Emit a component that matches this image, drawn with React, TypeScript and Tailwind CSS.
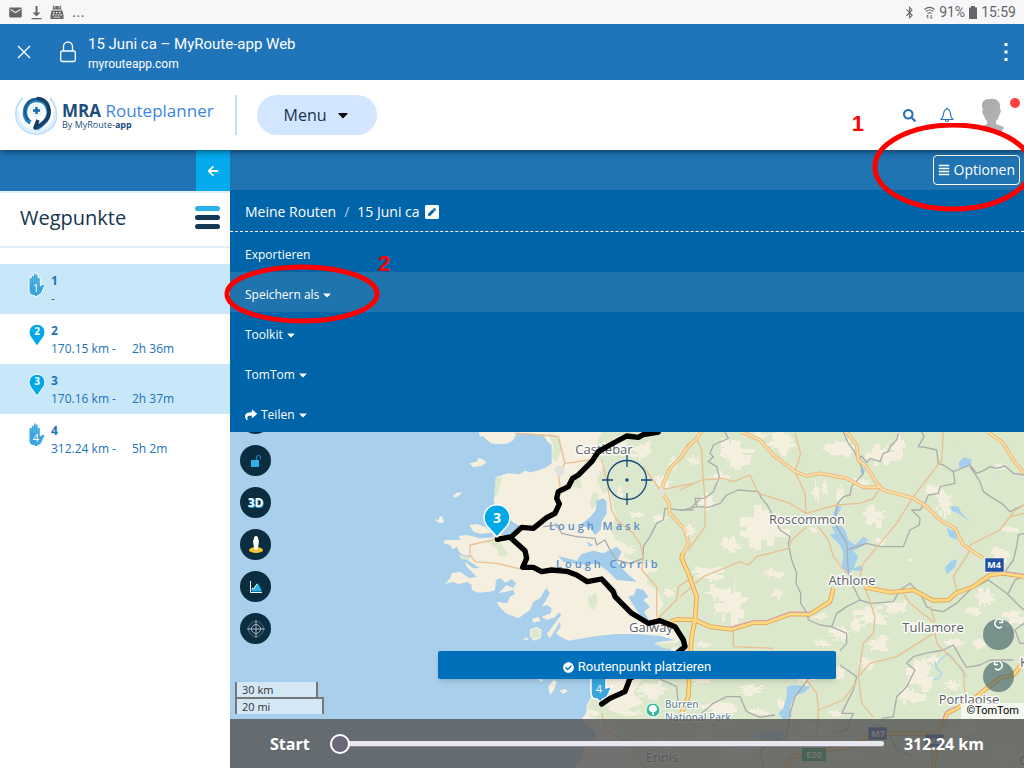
import React from "react";
import {
  FaAlignJustify,
  FaArrowLeft,
  FaBluetoothB,
  FaCaretDown,
  FaCheckCircle,
  FaPenSquare,
  FaSearch,
  FaShare,
} from "react-icons/fa";
import { MdMail } from "react-icons/md";

const StatusBar = () => {
  return (
    <div className="flex h-6 items-center justify-between bg-[#f7f7fa] px-2 font-['Roboto',sans-serif] text-sm text-[#666]">
      <div className="flex items-center gap-2">
        <MdMail size={15} />
        <svg width="11" height="15" viewBox="0 0 11 15" fill="currentColor">
          <path d="M4.500 1h2v6.500h3L5.500 11.500l-4-4h3zM.5 13h10v1.200H.5z" />
        </svg>
        <svg width="14" height="15" viewBox="0 0 14 15" fill="currentColor">
          <path d="M2.500 1l.8-.6 1 1.300a6 6 0 015.400 0l1-1.300.8.6-1 1.400c.6.600 1 1.200 1.200 2.100H2.300c.2-.9.600-1.500 1.200-2.100z" />
          <path
            fillRule="evenodd"
            d="M1.500 5.500h11l1 5v3.500h-13v-3.500zM3 7v1.300h1.500V7zm3 0v1.300h1.500V7zm3 0v1.300h1.500V7zM2.500 9.300v1.200H4V9.300zm2.800 0v1.200h1.300V9.300zm2.700 0v1.200h1.300V9.300zm2.500 0v1.200H12V9.300zM3.500 11.700v.9h7v-.9z"
          />
          <circle cx="5" cy="2.800" r=".6" fill="#f7f7fa" />
          <circle cx="9" cy="2.800" r=".6" fill="#f7f7fa" />
        </svg>
        <span className="text-base">...</span>
      </div>
      <div className="flex items-center">
        <FaBluetoothB size={13} />
        <svg className="ml-2" width="11" height="13" viewBox="0 0 11 13" fill="none" stroke="currentColor">
          <path d="M.5 3.500Q5.500-.8 10.500 3.500M2 5.500q3.500-3 7 0M3.500 7.500q2-1.500 4 0" strokeWidth="1.200" />
          <path d="M3.800 12.500V9M2.500 10.300L3.800 9M7 9v3.500M8.300 11.200L7 12.500" />
        </svg>
        <span className="ml-1">91%</span>
        <svg className="mx-1" width="8" height="13" viewBox="0 0 8 13" fill="currentColor">
          <path d="M2 0h4v1.500h2V13H0V1.500h2z" />
        </svg>
        <span>15:59</span>
      </div>
    </div>
  );
};

const BrowserBar = () => {
  return (
    <div className="flex h-14 items-center bg-[#2074ba] px-4 font-['Roboto',sans-serif] text-white">
      <button aria-label="Close">
        <svg width="16" height="16" viewBox="0 0 16 16" stroke="currentColor" strokeWidth="1.300">
          <path d="M2 2l12 12M14 2L2 14" />
        </svg>
      </button>
      <svg className="ml-7" width="16" height="22" viewBox="0 0 16 22" fill="none" stroke="currentColor" strokeWidth="1.300">
        <rect x=".7" y="10" width="14.600" height="10.500" rx="1.500" />
        <path d="M3.500 10V5.500a4.500 4.500 0 019 0V10" />
      </svg>
      <div className="ml-3 flex-1 pt-1">
        <p className="text-[15px] leading-5">15 Juni ca – MyRoute-app Web</p>
        <p className="text-xs leading-5">myrouteapp.com</p>
      </div>
      <button aria-label="More">
        <svg width="4" height="20" viewBox="0 0 4 20" fill="currentColor">
          <path d="M.5 1h3v3h-3zM.5 8.500h3v3h-3zM.5 16h3v3h-3z" />
        </svg>
      </button>
    </div>
  );
};

const Logo = () => {
  return (
    <a href="#" className="flex w-[200px] items-center gap-1 whitespace-nowrap">
      <svg className="shrink-0" width="43" height="40" viewBox="0 0 43 40" fill="none">
        <path d="M8 3C0 10-1 22 4 30q7 9 17 9t18-9C43 22 42 10 35 3" stroke="#bfe1fb" strokeWidth="2" />
        <path d="M3.500 16q-3 17 18 21 20-4 18-21" stroke="#dceffd" strokeWidth="3" />
        <path
          d="M15.500 27.500C6 23 9 5 21.500 5c12 0 15 14 9 21-3 4-6 5.500-9 7.500"
          stroke="#2384c4"
          strokeWidth="4.500"
        />
        <path d="M21.500 3.500c13 0 15 14 10 21-3 4-9 7-12 9.500l3.500-9" stroke="#163f66" strokeWidth="3.500" />
        <path d="M14 25q-4-3-4-9Q11 5 21.500 4" stroke="#1b5787" strokeWidth="2" />
        <circle cx="21.500" cy="15.500" r="7" fill="#e9f6ff" />
        <path d="M21.500 12v7M18 15.500h7" stroke="#1c6aa5" strokeWidth="2.400" />
      </svg>
      <span className="flex flex-col text-[#1d4d7c]">
        <span className="text-[17px] leading-5">
          <b>MRA</b> <span className="text-[#3c86dc]">Routeplanner</span>
        </span>
        <span className="text-[9px] leading-2">
          By MyRoute-<b>app</b>
        </span>
      </span>
    </a>
  );
};

const Header = () => {
  return (
    <header className="z-10 flex h-[70px] items-center bg-white pl-[15px] shadow-md shadow-black/30">
      <Logo />
      <div className="ml-5 h-10 w-0.5 bg-[#c3e0fb]" />
      <button className="ml-5 flex h-10 w-30 items-center justify-center gap-2 rounded-full bg-[#d3e6ff] text-base text-[#17354f]">
        Menu <FaCaretDown className="text-black" />
      </button>
      <div className="ml-auto flex items-center text-[#2a71b8]">
        <button aria-label="Suche">
          <FaSearch size={13} />
        </button>
        <button aria-label="Nachrichten" className="ml-6">
          <svg width="14" height="16" viewBox="0 0 14 16" fill="none" stroke="currentColor" strokeWidth="1.200" strokeLinejoin="round">
            <path d="M7 2C2.500 2.500 4 8 2.800 10L1 12.500h12L11.200 10C10 8 11.500 2.500 7 2zM7 2V.5M5.500 13a1.500 1.500 0 003 0" />
          </svg>
        </button>
        <button aria-label="Profil" className="relative ml-6 mr-5">
          <svg width="26" height="34" viewBox="0 0 26 34">
            <defs>
              <linearGradient id="bust" x1="0" x2="1" y1="0" y2="1">
                <stop stopColor="#aaa" />
                <stop offset="1" stopColor="#b5b5b5" />
              </linearGradient>
            </defs>
            <path
              fill="url(#bust)"
              d="M12 1c7-1 11 3 10 10l1 2-2 5q-1 4-3 5v3l8 3-2 4q-10 2-20 0l-4-3 9-4v-3q-2-1-3-5l-2-4 1-2C2 4 6 1 12 1z"
            />
          </svg>
          <span className="absolute -right-4 top-0 size-2.5 rounded-full bg-[#ff4040]" />
        </button>
      </div>
    </header>
  );
};

const Pin = ({ label }: { label: string }) => {
  return (
    <svg width="19" height="26" viewBox="0 0 19 26">
      <path d="M9 24L3 15.500a8 8 0 1112 0z" fill="#00a8e8" stroke="#fff" />
      <text x="9" y="13" textAnchor="middle" fontSize="10" fontWeight="700" fill="#fff">
        {label}
      </text>
    </svg>
  );
};

const Hand = ({ label }: { label: string }) => {
  return (
    <svg width="19" height="26" viewBox="0 0 19 26">
      <path
        d="M1 12V6q1-1.500 2.200 0V4q1.200-1.500 2.300 0V1.500q1.200-1 2.300 0V2.500q1.200-1.300 2.300 0V6q1.200-1.200 2.200.3V14l2-1.500q2-1 2.700.5L14 20q-1 3-4 3.500L8 25l-1.500-1.500q-5.500 0-5.500-5z"
        fill="#3ba5de"
        stroke="#fff"
      />
      <path d="M3.300 6v5M5.500 4v7M7.800 3v8M10.100 5v6" stroke="#8ccbed" strokeWidth=".5" />
      <text x="8" y="20" textAnchor="middle" fontSize="11" fill="#fff">
        {label}
      </text>
    </svg>
  );
};

const waypoints = [
  { id: "1", distance: "-", time: "", hand: true },
  { id: "2", distance: "170.15 km -", time: "2h 36m", hand: false },
  { id: "3", distance: "170.16 km -", time: "2h 37m", hand: false },
  { id: "4", distance: "312.24 km -", time: "5h 2m", hand: true },
];

const Sidebar = () => {
  return (
    <aside className="w-[230px] shrink-0 bg-white">
      <div className="flex h-[41px] justify-end bg-[#2074b5]">
        <button aria-label="Einklappen" className="flex w-[34px] items-center justify-center bg-[#03aaee] text-white">
          <FaArrowLeft size={12} />
        </button>
      </div>
      <div className="flex h-[57px] items-center justify-between border-y-2 border-[#deeefb] pb-1 pl-5 pr-2.5">
        <h1 className="text-xl text-[#17354f]">Wegpunkte</h1>
        <button aria-label="Liste" className="flex w-[25px] flex-col gap-1">
          <span className="h-[5px] rounded-full bg-[#2cb2ea] shadow-xs" />
          <span className="h-[5px] rounded-full bg-[#143655] shadow-xs" />
          <span className="h-[5px] rounded-full bg-[#143655] shadow-xs" />
        </button>
      </div>
      <ul className="pt-4">
        {waypoints.map((w) => (
          <li key={w.id} className="flex h-[50px] gap-1 pl-7 pt-2 text-xs leading-[18px] text-[#1a72b9] odd:bg-[#c8e8f9]">
            {w.hand ? <Hand label={w.id} /> : <Pin label={w.id} />}
            <div className="flex-1">
              <b className="block">{w.id}</b>
              <div className="flex">
                <span className="w-[81px]">{w.distance}</span>
                <span>{w.time}</span>
              </div>
            </div>
          </li>
        ))}
      </ul>
    </aside>
  );
};

const menuItems = [
  { label: "Exportieren", caret: false, share: false, active: false },
  { label: "Speichern als", caret: true, share: false, active: true },
  { label: "Toolkit", caret: true, share: false, active: false },
  { label: "TomTom", caret: true, share: false, active: false },
  { label: "Teilen", caret: true, share: true, active: false },
];

const OptionsMenu = () => {
  return (
    <nav className="bg-[#0064a8] text-white">
      <div className="flex h-10 items-center justify-end bg-[#2074b2] pr-1">
        <button className="flex h-[30px] items-center gap-1 rounded border border-white px-1 text-sm">
          <FaAlignJustify size={12} />
          Optionen
        </button>
      </div>
      <div className="flex h-[42px] items-center border-b border-dashed border-white px-[15px] pt-0.5 text-sm">
        <a href="#">Meine Routen</a>
        <span className="px-2 text-white/70">/</span>
        <span>15 Juni ca</span>
        <button aria-label="Umbenennen" className="ml-1">
          <FaPenSquare size={16} />
        </button>
      </div>
      {menuItems.map((item) => (
        <button
          key={item.label}
          className={`flex h-10 w-full items-center px-[15px] pt-1.5 text-xs ${item.active ? "bg-[#2074ae]" : ""}`}
        >
          {item.share && <FaShare className="mr-1" size={12} />}
          {item.label}
          {item.caret && <FaCaretDown className="ml-0.5" size={12} />}
        </button>
      ))}
    </nav>
  );
};

// cream fields scattered over the green land: centre x, centre y, radius x, radius y
const westFields = [
  [560, 40, 40, 20], [640, 60, 45, 30], [700, 155, 30, 22], [620, 255, 28, 12], [655, 410, 30, 18],
  [600, 360, 22, 14], [690, 265, 24, 12], [730, 100, 14, 30], [590, 520, 16, 26], [720, 490, 20, 18],
  [665, 780, 50, 28], [570, 800, 30, 14], [600, 850, 40, 12], [560, 960, 40, 24], [700, 940, 30, 20],
  [570, 190, 10, 20], [470, 60, 26, 20], [740, 660, 20, 10],
];

const eastFields = [
  [160, 70, 60, 50], [300, 40, 42, 36], [480, 60, 48, 36], [230, 18, 40, 12], [408, 185, 12, 34],
  [435, 175, 10, 30], [255, 290, 80, 62], [150, 345, 40, 25], [90, 430, 55, 25], [155, 520, 50, 66],
  [110, 485, 34, 25], [280, 430, 34, 15], [295, 490, 30, 18], [605, 75, 60, 30], [655, 55, 22, 42],
  [580, 260, 40, 36], [545, 160, 28, 20], [600, 335, 18, 12], [795, 220, 30, 42], [765, 180, 32, 20],
  [690, 390, 10, 4], [990, 300, 32, 10], [960, 375, 32, 26], [915, 500, 34, 30], [1000, 560, 34, 30],
  [880, 545, 26, 15], [650, 530, 38, 25], [705, 590, 26, 18], [575, 560, 55, 36], [480, 610, 34, 26],
  [595, 645, 40, 30], [530, 590, 22, 26], [720, 740, 44, 50], [690, 800, 50, 25], [760, 690, 28, 14],
  [830, 640, 38, 14], [820, 765, 28, 20], [560, 700, 26, 20], [470, 725, 28, 20], [420, 560, 26, 10],
  [120, 830, 64, 22], [210, 780, 44, 20], [235, 845, 34, 12], [300, 820, 16, 20], [370, 745, 34, 20],
  [470, 850, 26, 12], [60, 750, 42, 14], [70, 930, 42, 20], [180, 960, 54, 25], [320, 930, 36, 25],
  [420, 900, 42, 20], [520, 980, 42, 14], [700, 960, 32, 20], [860, 900, 32, 14], [980, 970, 32, 20],
  [70, 645, 28, 10], [40, 90, 22, 16], [80, 215, 20, 26], [120, 140, 30, 14], [400, 300, 16, 12],
  [480, 190, 12, 30], [960, 110, 20, 10], [30, 300, 16, 20], [430, 640, 30, 12], [900, 640, 26, 18],
];

// ragged outline on a 3 unit grid
const fieldPath = ([cx, cy, rx, ry]: number[]) => {
  const steps = 26;
  let d = "";
  for (let i = 0; i < steps; i++) {
    const noise = Math.abs(Math.sin(cx * 12.9 + cy * 7.3 + i * 78.2) * 43758.5) % 1;
    const r = 0.4 + noise * 0.75;
    const a = (i / steps) * Math.PI * 2;
    const x = Math.round((cx + Math.cos(a) * rx * r) / 3) * 3;
    const y = Math.round((cy + Math.sin(a) * ry * r) / 3) * 3;
    d += i === 0 ? `M${x} ${y}` : `H${x}V${y}`;
  }
  return `${d}z`;
};

const places = [
  { name: "Castlebar", x: 604, y: 454 },
  { name: "Roscommon", x: 807, y: 524 },
  { name: "Athlone", x: 852, y: 585 },
  { name: "Galway", x: 651, y: 632 },
  { name: "Tullamore", x: 933, y: 632 },
  { name: "Portlaoise", x: 969, y: 704 },
  { name: "Ennis", x: 662, y: 762 },
  { name: "K", x: 1024, y: 667 },
  { name: "C", x: 1023, y: 765 },
];

const yellowRoadsWest = "M780 40L755 80 720 115 700 160 695 185 715 215 720 250 765 300 775 340 760 370";
const yellowRoadsEast =
  "M68 0L50 25 20 55 0 85M185 6L240 30 280 75 345 125 380 138 420 130 500 145 550 172 600 172M500 6L530 45 535 90 560 110 590 160 610 180 700 205 740 230 780 270 825 295 850 345 910 385M925 6L970 40 1000 90 1032 130";
const motorways =
  "M8 370L5 385 25 430 50 500 45 570 35 620 30 700 25 800 0 860M-30 575L-10 568 45 570 90 590 155 598 220 578 260 578 330 552 390 553 450 515 460 475M555 472L630 487 700 480 760 512 805 510 830 488 880 470 930 435 970 430 1032 440M1032 695L1000 735 960 745 920 775 890 800 830 835 800 850 790 880 770 905 760 1014M310 1014L340 980 430 960 520 950 560 920 640 910 760 910";

const MapDrawing = () => {
  return (
    <svg
      className="absolute inset-0 size-full font-['Open_Sans',sans-serif]"
      viewBox="230 432 794 336"
      preserveAspectRatio="xMinYMin slice"
    >
      <path fill="#a8cfeb" d="M230 432h794v336H230z" />
      <g transform="translate(430 430) scale(.33333)">
        {/* coast */}
        <path
          fill="#f5efe0"
          d="M145 0L150 20 158 18 182 40 195 42 228 42 248 32 262 8 340 14 352 35 365 45 365 100 350 112 330 120 300 127 285 122 268 133 235 130 200 140 195 160 203 185 190 210 195 225 235 262 255 285 262 300 245 312 225 318 205 310 180 302 165 290 140 282 118 285 130 305 150 311 185 308 195 322 150 325 110 315 85 318 92 330 45 330 40 340 60 345 68 358 80 350 92 372 120 378 112 390 135 405 150 415 130 415 105 395 110 410 125 425 140 440 118 445 90 425 65 430 60 445 45 462 70 455 85 463 112 455 125 465 125 480 145 488 180 485 195 480 198 450 212 445 225 458 245 448 258 460 250 475 230 465 215 480 205 490 228 485 250 480 255 492 240 500 232 520 200 515 208 530 228 550 265 565 300 540 310 515 330 505 345 480 350 475 360 490 345 515 335 530 350 525 365 535 362 550 335 560 350 570 375 562 385 548 395 552 375 580 360 600 350 612 360 625 375 600 390 575 392 590 378 610 392 620 415 632 500 618 560 612 620 612 690 618 735 630 690 635 672 640 690 645 730 650 720 665 600 680 500 745 485 800 470 825 468 850 455 867 495 905 500 925 465 945 455 985 430 1014H1790V0z"
        />
        <path
          fill="#f5efe0"
          d="M118 100L140 95 145 84 158 88 170 98 155 107 130 112zM68 198L80 188 97 186 90 195 75 203zM12 268L25 270 30 258 38 262 42 275 32 280 22 275zM300 598L320 590 335 600 332 625 310 632 300 618zM276 628L290 622 296 630zM305 568L325 560 332 572 312 578zM355 770L370 750 380 755 372 780 360 796zM388 782L405 776 413 784 400 792zM322 746L340 750 335 756z"
        />
        {/* woods */}
        <path
          fill="#dbe8cc"
          d="M520 0L500 40 505 90 525 100 500 150 520 190 540 180 545 210 560 260 540 300 560 330 590 345 580 380 620 400 655 420 650 460 680 480 700 520 680 560 700 590 740 610 765 650 750 680 640 740 610 790 640 820 560 850 520 830 500 860 470 850 500 870 560 900 570 960 620 1014H1790V0z"
        />
        <path
          fill="#dbe8cc"
          d="M355 8L385 20 395 60 380 95 365 85 370 45zM168 335L200 325 215 345 235 370 225 380 205 378 200 355zM475 490L482 500 500 486 502 520 490 540 475 525zM302 600L320 594 332 604 328 622 308 626zM196 145L218 140 212 160 203 190 192 205zM480 215L492 182 505 195 502 222 485 238zM85 375L110 378 118 390 95 388zM420 150L450 145 455 175 430 170zM470 835L490 800 540 830 520 850zM670 640L735 640 760 625 750 660 700 655zM530 450L550 465 575 500 560 510 530 480z"
        />
        {westFields.map((f) => (
          <path key={`${f[0]}-${f[1]}`} d={fieldPath(f)} fill="#f5efe0" />
        ))}
        {/* lakes and the fjord */}
        <path
          fill="#a4cdec"
          d="M500 212L520 205 530 215 530 250 515 275 512 300 495 315 480 295 450 285 480 262 498 240zM385 378L440 392 455 372 490 362 520 370 560 350 575 365 560 395 590 430 620 455 560 450 530 420 500 400 470 405 440 402 400 395zM620 475L640 480 655 500 640 510 660 530 642 545 660 575 630 555 610 525 595 500 612 495zM238 270L275 292 262 298 240 280zM375 278L388 285 378 296zM470 335L490 345 478 350z"
        />
        <path
          fill="none"
          stroke="#aaadac"
          strokeWidth="4"
          strokeLinejoin="round"
          d="M790 240L750 240 705 235 700 270 680 280 660 320 640 350 640 385 600 400 560 390 540 360 525 330 500 345 495 325 440 320 395 310 380 285 340 290M690 747L740 770 745 830"
        />
        <path
          fill="none"
          stroke="#eabf93"
          strokeWidth="4"
          strokeLinejoin="round"
          d="M255 10L340 15 385 20 395 60 405 100 480 90M405 100L385 130 390 170 400 180M515 90L530 150 545 240 560 270 610 310 630 340 640 380 635 420 680 470 680 560M640 110L690 180 790 160M195 328L120 345 120 375 135 395 200 400 275 418M680 570L740 510 745 470 790 440M515 850L530 900 580 930 640 950"
        />
        <path d={yellowRoadsWest} fill="none" stroke="#e9b877" strokeWidth="11" strokeLinejoin="round" />
        <path d={yellowRoadsWest} fill="none" stroke="#fbdca6" strokeWidth="6" strokeLinejoin="round" />
        <path fill="#e3e1dc" d="M370 120L385 105 400 110 405 125 390 140zM690 170L705 180 700 200 685 190z" />
      </g>
      <g transform="translate(680 430) scale(.33333)" fill="none" strokeLinejoin="round">
        {eastFields.map((f) => (
          <path key={`${f[0]}-${f[1]}`} d={fieldPath(f)} fill="#f5efe0" />
        ))}
        <path
          fill="#a4d0ee"
          d="M455 290L480 285 495 300 505 330 525 345 550 320 565 330 545 350 520 362 535 380 520 415 545 405 545 425 520 420 505 430 485 410 490 370 480 345 460 325 450 315 465 310zM470 228L485 230 468 265 458 255zM800 295L828 305 832 330 808 320zM812 228L835 230 845 250 872 277 835 250 815 243zM795 412L815 392 832 388 825 412 800 433zM835 100L850 82 875 88 872 105 840 118zM320 770L340 765 392 770 370 790 345 795 330 830 335 860 310 870 295 850 310 835 320 800zM215 920L260 905 320 905 295 930zM545 112L556 118 550 135 540 125z"
        />
        <path d="M765 710L780 690 805 670 815 680M765 695L770 715 785 730 775 745 760 748M815 680L860 740" stroke="#a8d5ee" strokeWidth="4" />
        <path fill="#e3e1dc" d="M835 350L850 342 860 360 845 372 830 365zM585 165L605 170 610 185 590 185zM65 560L82 552 85 565 70 572zM835 50L852 52 846 68zM935 125L952 128 945 148z" />
        {/* county borders */}
        <path
          stroke="#aaadac"
          strokeWidth="4"
          d="M135 6L145 25 100 45 90 70 100 80 85 95 110 110 118 140 100 185 75 205 45 205 50 230 10 240 0 240M35 232L60 205M50 230L85 232 120 220 140 195 175 180 235 185 245 205 262 225 280 260 300 300 330 320 325 340 335 390 350 430 348 460 362 490 362 520 382 550 385 570 420 585 455 590 500 610 500 640 480 662M490 6L505 40 520 60 540 100 550 130 515 170 510 195 490 200 470 225 465 280 500 340 505 430 520 470 540 510 500 530 470 550 455 590M535 90L545 78 560 98 570 85 600 95 610 70 625 65 630 50 650 30 655 10M725 6L732 20 715 50 735 52 770 60 775 100 790 105 820 125 870 105 890 130 910 122 930 110 950 115 975 108 1000 130 1032 135M820 125L825 160 780 170 775 190 745 195 735 220 720 240 695 240 720 265 718 285 690 300 670 350 640 350 600 350 560 340 500 360M870 110L900 155 910 185 940 205 965 220 990 245 1032 225M1032 310L1015 315 1010 350 1000 390 975 425M540 510L570 520 600 518 640 515 660 480 690 460 720 490 740 530 760 540 790 545 830 520 870 480 925 450 980 490 1010 520 1032 540M985 490L1005 450 1032 440M480 705L530 740 520 780 485 850 520 850 500 900 460 910M605 865L640 860 650 800 680 770 705 720 680 700 700 680 735 670 790 660 820 645 840 680 860 712 900 705 930 690 1000 690M65 850L100 820 140 800 180 800 200 845 240 862 285 855M385 747L345 800 330 850 320 920 240 960 250 1014M1032 580L1005 600 1020 640 1032 640M580 880L620 900 650 960 700 980"
        />
        {/* regional roads */}
        <path
          stroke="#eabf93"
          strokeWidth="4"
          d="M50 25L65 60 70 150 75 210 75 290 25 360M0 180L65 150 130 145 160 155 210 135 235 190 330 220 378 250M345 10L362 70 345 125 375 190 378 250 470 225 540 220 580 205 600 175M790 6L785 90 700 200 650 280 600 340 550 400 540 440 565 500 585 560 580 610 550 640 535 740 545 820 580 862M0 500L70 440 180 395 205 405 230 380 325 355 335 330 380 290M415 290L445 330 460 380 500 430M1032 250L990 260 960 300 870 345 865 370 820 440 830 480M670 490L690 520 760 575 770 640 850 720 855 800M535 740L570 700 650 680 760 610M750 530L765 575M160 600L160 650 280 655M380 750L410 790 415 840 490 810 530 755M415 840L410 920M1032 225L1000 245 975 280"
        />
        <path d={yellowRoadsEast} stroke="#e9b877" strokeWidth="11" />
        <path d={yellowRoadsEast} stroke="#fbdca6" strokeWidth="6" />
        <path d={motorways} stroke="#e8a765" strokeWidth="14" />
        <path d={motorways} stroke="#fddc80" strokeWidth="8" />
        <path d="M150 592L220 572 260 572 330 546 390 547M970 424L1032 433M830 830L800 842 788 870" stroke="#dc9bb4" strokeWidth="3" />
      </g>
      {/* labels */}
      <g
        fontSize="13"
        fill="#5d5f68"
        stroke="#fff"
        strokeOpacity=".85"
        strokeWidth="3"
        strokeLinejoin="round"
        paintOrder="stroke"
        textAnchor="middle"
      >
        {places.map((p) => (
          <text key={p.name} x={p.x} y={p.y}>
            {p.name}
          </text>
        ))}
      </g>
      <g fontSize="11" fontWeight="600" fill="#5b8dc6" letterSpacing="3">
        <text x="549" y="530">Lough Mask</text>
        <text x="556" y="568">Lough Corrib</text>
      </g>
      <g fontSize="10" fontWeight="600" fill="#718f98" stroke="#fff" strokeWidth="2" paintOrder="stroke">
        <text x="665" y="708">Burren</text>
        <text x="665" y="721">National Park</text>
      </g>
      <circle cx="653" cy="710" r="7" fill="#35b799" stroke="#fff" />
      <path d="M652 715v-3q-4-1-3-4 1-3 4-3t4 3q1 3-3 4v3z" fill="#fff" />
      <g fontSize="9" fontWeight="700" fill="#fff" textAnchor="middle">
        <path fill="#2150a0" stroke="#fff" strokeWidth=".5" d="M985 558h19v14h-19zM868 727h19v13h-19zM925 734h19v13h-19z" />
        <path fill="#0a9b61" d="M802 748h24v13h-24z" />
        <text x="994" y="568">M4</text>
        <text x="878" y="737">M7</text>
        <text x="934" y="744">M8</text>
        <text x="814" y="758">E20</text>
      </g>
      {/* the hand of waypoint 4 */}
      <path d="M591 678v15q0 6 6 6l3 3 3-3q4-1 5-4l4-9-6 2v-10z" fill="#3ba5de" stroke="#fff" strokeWidth="1.500" />
      <text x="599" y="693" textAnchor="middle" fontSize="11" fill="#fff">4</text>
      {/* route */}
      <path
        transform="translate(430 430) scale(.33333)"
        fill="none"
        stroke="#000"
        strokeWidth="16"
        strokeLinecap="round"
        strokeLinejoin="round"
        d="M685 6L640 14 625 22 590 18 545 42 505 65 485 95 445 135 428 145 415 170 385 185 380 205 388 222 375 250 350 263 310 295 275 292 245 320 202 328M240 322L285 362 290 385 278 412 310 412 335 425 365 420 410 424 440 435 472 455 515 447 550 485 555 500 605 550 655 580 690 572 735 590 760 630 765 650 740 670 600 745 585 785 540 805 515 822"
      />
      <path d="M497 537l-10-11a13 13 0 1120 0z" fill="#00a8e8" stroke="#fff" strokeWidth="1.500" />
      <text x="497" y="523" textAnchor="middle" fontSize="14" fontWeight="700" fill="#fff">3</text>
      {/* crosshair */}
      <g fill="none" stroke="#11497f" strokeWidth="1.300">
        <circle cx="627" cy="480" r="19.500" />
        <path d="M627 455v12M627 493v12M602 480h11M641 480h11" />
        <circle cx="627" cy="480" r="1" fill="#11497f" />
      </g>
    </svg>
  );
};

const MapTools = () => {
  const round = "flex size-[31px] items-center justify-center rounded-full bg-[#0c2c40]";
  return (
    <div className="absolute -top-[29px] left-[10px] flex flex-col gap-[11px]">
      <button aria-label="Ebenen" className={round} />
      <button aria-label="Sperren" className={round}>
        <svg width="14" height="14" viewBox="0 0 14 14">
          <path fill="#2cb2ea" d="M2 6h8v7H2z" />
          <path fill="none" stroke="#1c86b8" strokeWidth="1.200" d="M7.500 6V3.500q0-2 2-2t2 2V5" />
        </svg>
      </button>
      <button className={`${round} text-xs font-bold text-white [text-shadow:1px_1px_0_#1c9be0]`}>3D</button>
      <button aria-label="Street View" className={round}>
        <svg width="16" height="20" viewBox="0 0 16 20">
          <ellipse cx="8" cy="15" rx="7" ry="3" fill="#fcc02e" />
          <path fill="#fff" d="M8 1a2 2 0 012 2.500q1.500 3 .5 6L9.500 15h-3l-1-5.500q-1-3 .5-6A2 2 0 018 1z" />
        </svg>
      </button>
      <button aria-label="Höhenprofil" className={round}>
        <svg width="14" height="14" viewBox="0 0 14 14" fill="none">
          <path fill="#2cb2ea" d="M2.500 11.500V8l2 1 4-6 1.500 2 3 6.500z" />
          <path stroke="#fff" d="M1.500 1v11.500H13M3 8l1.500 1L8 4" />
        </svg>
      </button>
      <button aria-label="Zentrieren" className={round}>
        <svg width="18" height="18" viewBox="0 0 18 18" fill="none" stroke="#a9bbc6">
          <circle cx="9" cy="9" r="7.500" stroke="#587180" />
          <circle cx="9" cy="9" r="4.500" />
          <path d="M9 0v18M0 9h18" />
        </svg>
      </button>
    </div>
  );
};

const MapArea = () => {
  return (
    <section className="relative min-h-[336px] flex-1 overflow-hidden bg-[#a8cfeb]">
      <MapDrawing />
      <MapTools />
      <div className="absolute bottom-[76px] right-[10px] flex flex-col gap-[11px] text-white">
        <button aria-label="Wiederholen" className="flex size-[31px] justify-center rounded-full bg-[#35575f]/60">
          <svg width="11" height="10" viewBox="0 0 11 10" fill="none" stroke="currentColor" strokeWidth="1.500">
            <path d="M8.500 1A4.200 4.200 0 109 7.500M9.500 0v3.500H6" />
          </svg>
        </button>
        <button aria-label="Rückgängig" className="flex size-[31px] justify-center rounded-full bg-[#35575f]/60">
          <svg width="11" height="10" viewBox="0 0 11 10" fill="none" stroke="currentColor" strokeWidth="1.500">
            <path d="M2.500 1A4.200 4.200 0 112 7.500M1.500 0v3.500H5" />
          </svg>
        </button>
      </div>
      <button className="absolute bottom-[89px] left-[208px] right-[188px] flex h-7 items-center justify-center gap-1 rounded-xs bg-[#0070ba] pt-1 font-['Roboto',sans-serif] text-[13px] text-white shadow-md">
        <FaCheckCircle size={11} />
        Routenpunkt platzieren
      </button>
      <div className="absolute bottom-[54px] left-[5px] w-[89px] text-[11px] leading-[15px] text-[#333]">
        <div className="w-[83px] border-x-2 border-[#777] bg-white/50 pl-[5px]">30 km</div>
        <div className="border-2 border-b-0 border-[#777] bg-white/50 pl-[5px]">20 mi</div>
      </div>
      <a
        href="#"
        className="absolute bottom-[49px] right-0 bg-white/70 px-[5px] font-['Roboto',sans-serif] text-[11px] leading-4 text-black"
      >
        ©TomTom
      </a>
      <div className="absolute inset-x-0 bottom-0 flex h-[49px] items-center gap-5 bg-[#555]/82 px-10 font-bold text-white">
        <label htmlFor="distance">Start</label>
        <input
          id="distance"
          type="range"
          defaultValue={0}
          className="h-[5px] min-w-0 flex-1 appearance-none rounded-full bg-[#e8e6ee] shadow-[0_1px_0_#8b8996] [&::-webkit-slider-thumb]:size-5 [&::-webkit-slider-thumb]:appearance-none [&::-webkit-slider-thumb]:rounded-full [&::-webkit-slider-thumb]:border-2 [&::-webkit-slider-thumb]:border-solid [&::-webkit-slider-thumb]:border-white [&::-webkit-slider-thumb]:bg-[#6a6878]"
        />
        <output htmlFor="distance">312.24 km</output>
      </div>
    </section>
  );
};

// red hints that explain the two steps
const Hints = () => {
  return (
    <div className="font-['Liberation_Sans',sans-serif] text-[22px] font-bold leading-6 text-[#f00]">
      <svg className="pointer-events-none absolute right-0 top-[123px] z-20" width="152" height="90" viewBox="0 0 152 90">
        <ellipse cx="81" cy="44" rx="78" ry="42" fill="none" stroke="currentColor" strokeWidth="5" />
      </svg>
      <svg className="pointer-events-none absolute left-[224px] top-[264px] z-20" width="158" height="60" viewBox="0 0 158 60">
        <ellipse cx="78" cy="30" rx="75" ry="27" fill="none" stroke="currentColor" strokeWidth="5" />
      </svg>
      <span className="absolute right-[160px] top-[112px] z-20">1</span>
      <span className="absolute left-[378px] top-[252px] z-20">2</span>
    </div>
  );
};

const App = () => {
  return (
    <div className="relative flex min-h-screen flex-col overflow-hidden bg-white font-['Open_Sans',sans-serif]">
      <StatusBar />
      <BrowserBar />
      <Header />
      <main className="flex flex-1">
        <Sidebar />
        <div className="flex min-w-0 flex-1 flex-col">
          <OptionsMenu />
          <MapArea />
        </div>
      </main>
      <Hints />
    </div>
  );
};

export default App;
